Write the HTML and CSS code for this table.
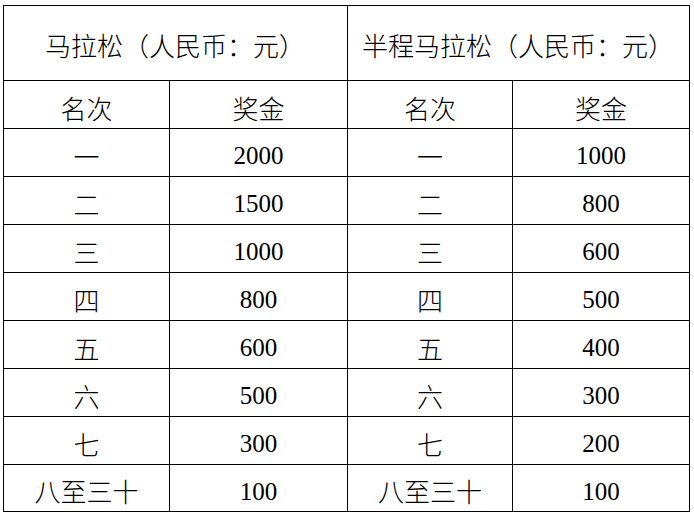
FILE: index.html
```html
<!DOCTYPE html>
<html lang="zh-CN">
<head>
<meta charset="utf-8">
<title>奖金表</title>
<link rel="stylesheet" href="styles.css">
</head>
<body>
<div class="prize-table">
  <div class="cell head">马拉松（人民币：元）</div>
  <div class="cell head">半程马拉松（人民币：元）</div>

  <div class="cell">名次</div><div class="cell">奖金</div><div class="cell">名次</div><div class="cell">奖金</div>
  <div class="cell">一</div><div class="cell num">2000</div><div class="cell">一</div><div class="cell num">1000</div>
  <div class="cell">二</div><div class="cell num">1500</div><div class="cell">二</div><div class="cell num">800</div>
  <div class="cell">三</div><div class="cell num">1000</div><div class="cell">三</div><div class="cell num">600</div>
  <div class="cell">四</div><div class="cell num">800</div><div class="cell">四</div><div class="cell num">500</div>
  <div class="cell">五</div><div class="cell num">600</div><div class="cell">五</div><div class="cell num">400</div>
  <div class="cell">六</div><div class="cell num">500</div><div class="cell">六</div><div class="cell num">300</div>
  <div class="cell">七</div><div class="cell num">300</div><div class="cell">七</div><div class="cell num">200</div>
  <div class="cell">八至三十</div><div class="cell num">100</div><div class="cell">八至三十</div><div class="cell num">100</div>
</div>
</body>
</html>
```

FILE: styles.css
```css
html, body {
  margin: 0;
  padding: 0;
  background: #ffffff;
}

body {
  font-family: "Noto Sans CJK SC", "Noto Sans CJK JP", sans-serif;
  color: #000000;
}

.prize-table {
  display: grid;
  grid-template-columns: 165px 177px 164px 176px;
  grid-template-rows: 74px repeat(8, 47px) 46px;
  gap: 1px;
  padding: 1px;
  background: #000000;
  width: max-content;
  margin: 5px 0 0 3px;
}

.cell {
  background: #ffffff;
  display: flex;
  align-items: center;
  justify-content: center;
  font-size: 26px;
  font-weight: 300;
  line-height: 1;
  padding-top: 6px;
  box-sizing: border-box;
  white-space: nowrap;
}

.head {
  grid-column: span 2;
  font-size: 26px;
  padding-right: 1px;
  padding-top: 3px;
}

.num {
  font-family: "Liberation Serif", "Times New Roman", serif;
  font-size: 25px;
  font-weight: 400;
}
```
